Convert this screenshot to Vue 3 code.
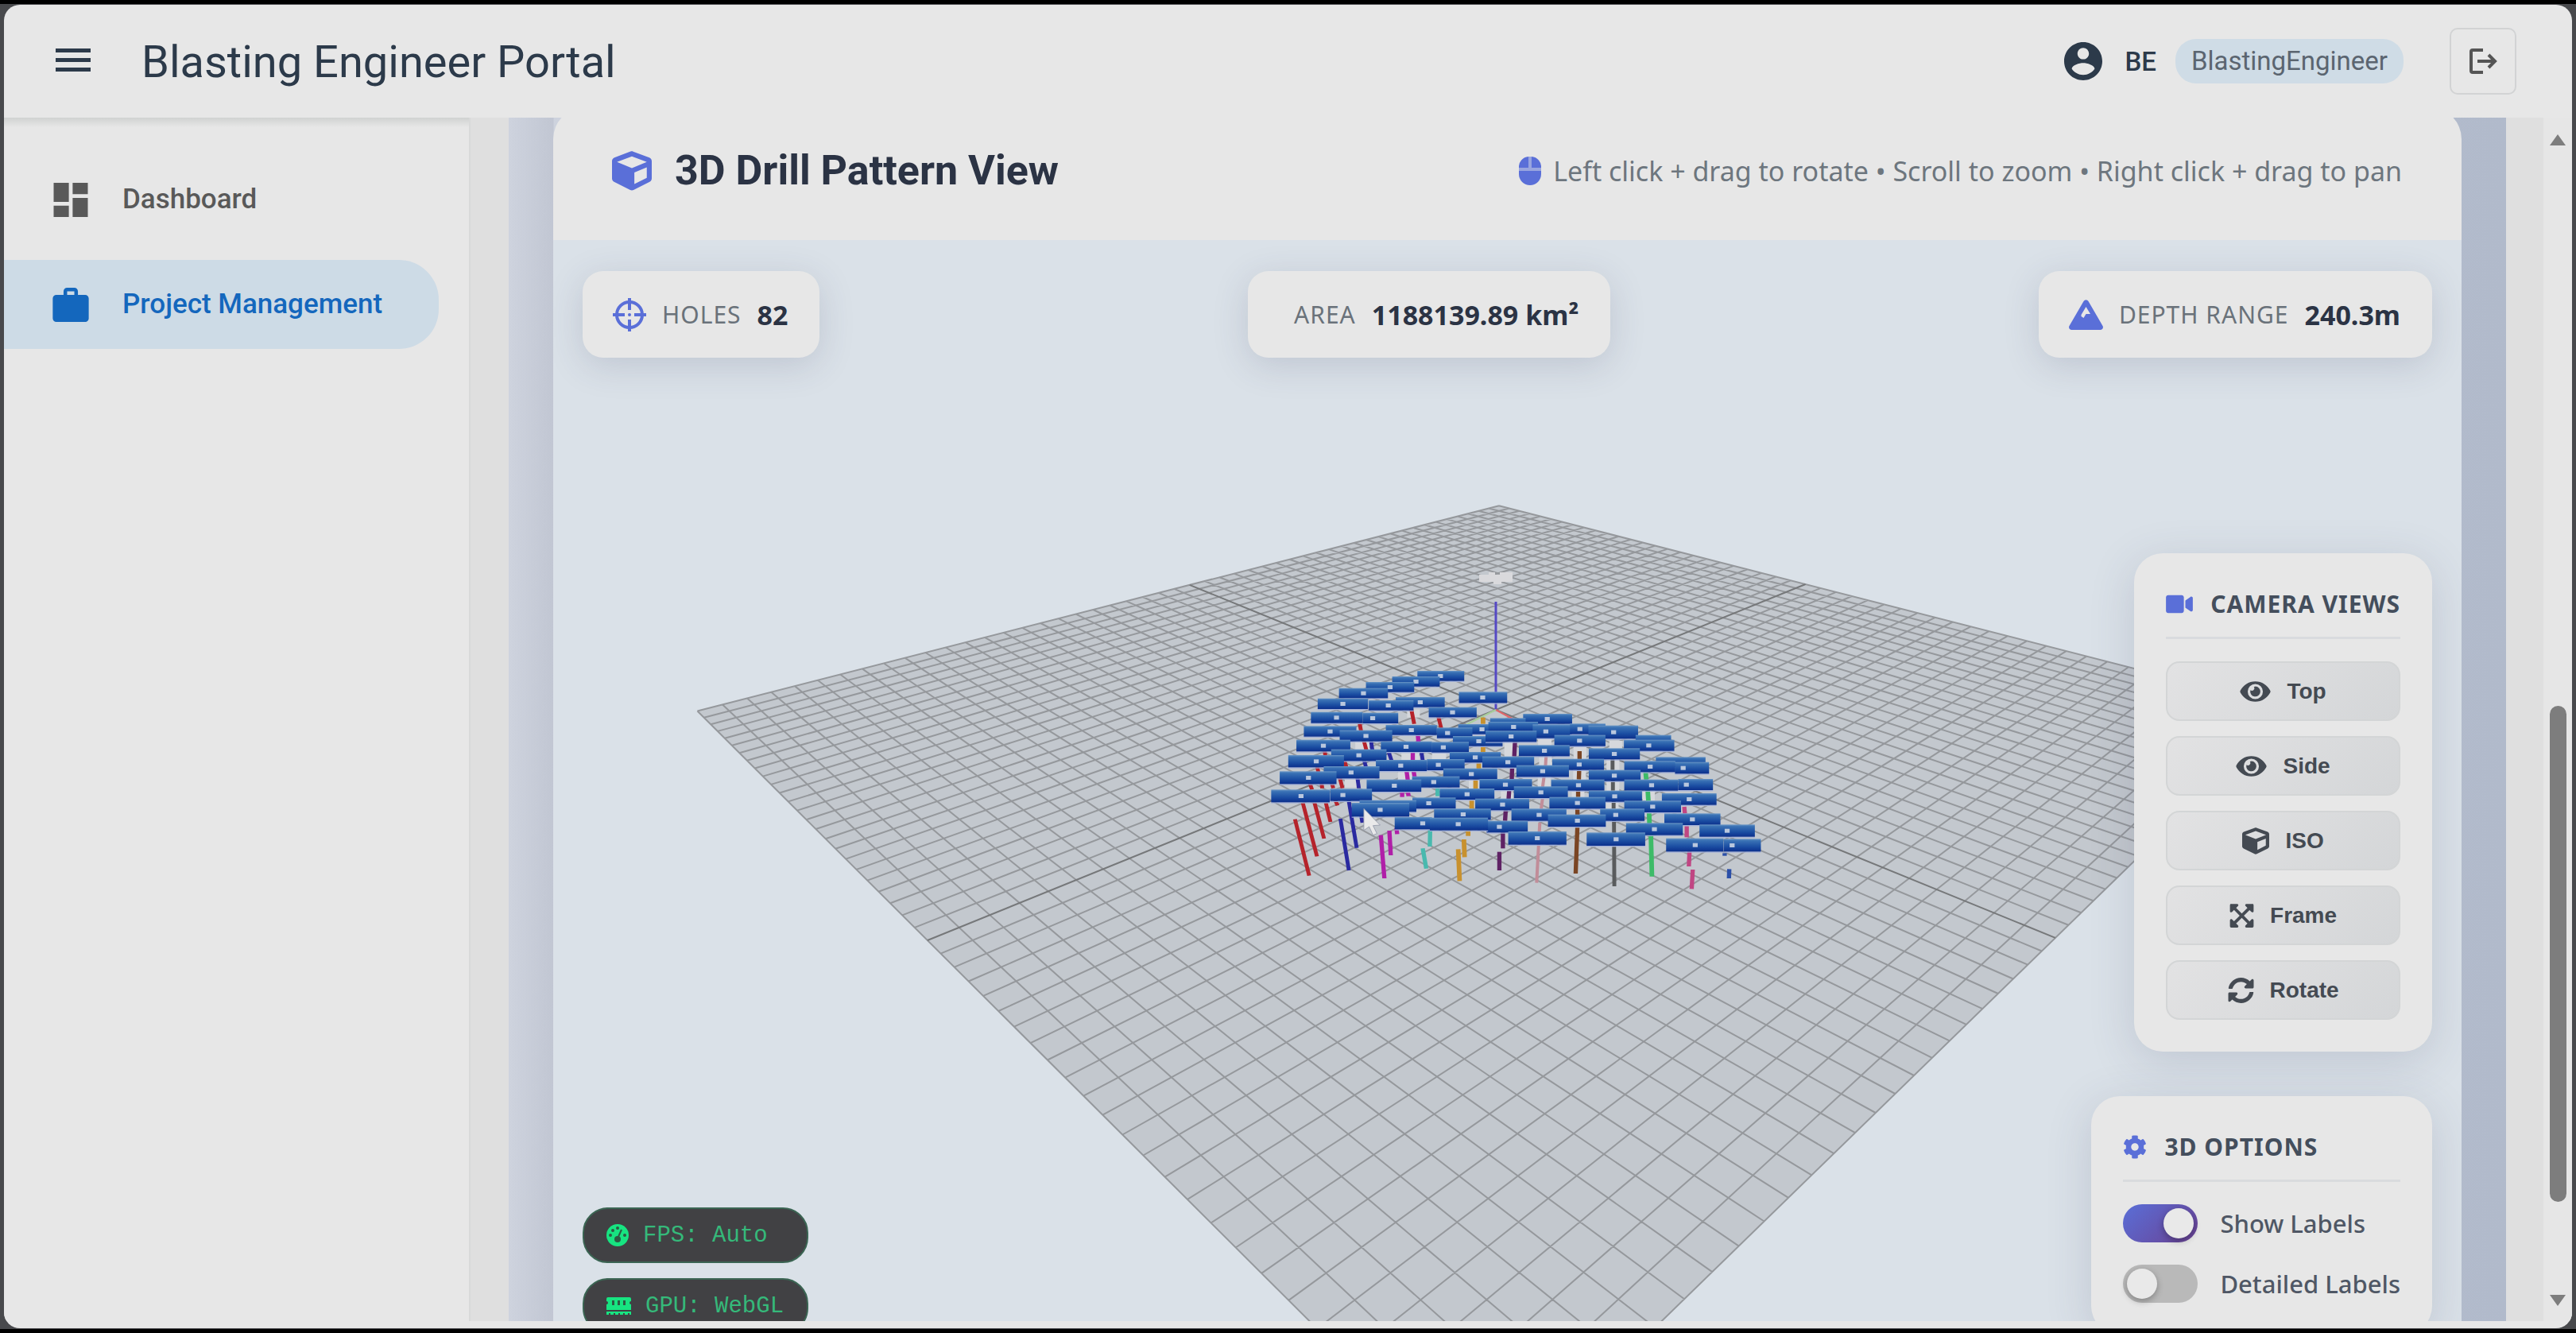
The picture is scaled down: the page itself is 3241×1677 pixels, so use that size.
<script setup>
import { ref } from 'vue'

const icons = {
  cube: { box: '0 0 512 512', d: 'M239.1 6.3l-208 78c-18.7 7-31.1 25-31.1 45v225.1c0 18.2 10.3 34.8 26.5 42.9l208 104c13.5 6.8 29.4 6.8 42.9 0l208-104c16.3-8.1 26.5-24.8 26.5-42.9V129.3c0-20-12.4-37.9-31.1-44.9l-208-78C262 2.2 250 2.2 239.1 6.3zM256 68.4l192 72v1.1l-192 78-192-78v-1.1l192-72zm32 356V275.5l160-65v133.9l-160 80z' },
  eye: { box: '0 0 576 512', d: 'M572.52 241.4C518.29 135.59 410.93 64 288 64S57.68 135.64 3.48 241.41a32.35 32.35 0 0 0 0 29.19C57.71 376.41 165.07 448 288 448s230.32-71.64 284.52-177.41a32.35 32.35 0 0 0 0-29.19zM288 400a144 144 0 1 1 144-144 143.93 143.93 0 0 1-144 144zm0-240a95.31 95.31 0 0 0-25.31 3.79 47.85 47.85 0 0 1-66.9 66.9A95.78 95.78 0 1 0 288 160z' },
  expand: { box: '0 0 448 512', d: 'M448 344v112a23.94 23.94 0 0 1-24 24H312c-21.39 0-32.09-25.9-17-41l36.2-36.2L224 295.6 116.77 402.9 153 439c15.09 15.1 4.39 41-17 41H24a23.94 23.94 0 0 1-24-24V344c0-21.4 25.89-32.1 41-17l36.19 36.2L184.46 256 77.18 148.7 41 185c-15.1 15.1-41 4.4-41-17V56a23.94 23.94 0 0 1 24-24h112c21.39 0 32.09 25.9 17 41l-36.2 36.2L224 216.4l107.23-107.3L295 73c-15.09-15.1-4.39-41 17-41h112a23.94 23.94 0 0 1 24 24v112c0 21.4-25.89 32.1-41 17l-36.19-36.2L263.54 256l107.28 107.3L407 327.1c15.1-15.2 41-4.5 41 16.9z' },
  sync: { box: '0 0 512 512', d: 'M370.72 133.28C339.458 104.008 298.888 87.962 255.848 88c-77.458.068-144.328 53.178-162.791 126.85-1.344 5.363-6.122 9.15-11.651 9.15H24.103c-7.498 0-13.194-6.807-11.807-14.176C33.933 94.924 134.813 8 256 8c66.448 0 126.791 26.136 171.315 68.685L463.03 40.97C478.149 25.851 504 36.559 504 57.941V192c0 13.255-10.745 24-24 24H345.941c-21.382 0-32.09-25.851-16.971-40.971l41.75-41.749zM32 296h134.059c21.382 0 32.09 25.851 16.971 40.971l-41.75 41.75c31.262 29.273 71.835 45.319 114.876 45.28 77.418-.07 144.315-53.144 162.787-126.849 1.344-5.363 6.122-9.15 11.651-9.15h57.304c7.498 0 13.194 6.807 11.807 14.176C478.067 417.076 377.187 504 256 504c-66.448 0-126.791-26.136-171.315-68.685L48.97 471.03C33.851 486.149 8 475.441 8 454.059V320c0-13.255 10.745-24 24-24z' },
}

const views = [
  { name: 'Top', icon: icons.eye, w: 39 },
  { name: 'Side', icon: icons.eye, w: 39 },
  { name: 'ISO', icon: icons.cube, w: 34 },
  { name: 'Frame', icon: icons.expand, w: 31 },
  { name: 'Rotate', icon: icons.sync, w: 33 },
]

const showLabels = ref(true)
const detailedLabels = ref(false)

// Ground plane seen through the scene camera; u and v run from -1 to 1.
const project = (u, v) => {
  const w = 1 - 0.2925 * u - 0.2947 * v
  return [(1882 - 52.5 * u - 1059 * v) / w - 696, 694 / w - 103]
}
const pt = (u, v) => project(u, v).map((n) => n.toFixed(1)).join(' ')
const DIV = 25
let gridPath = ''
for (let i = -DIV; i <= DIV; i++) {
  if (i === 0) continue
  const t = i / DIV
  gridPath += `M${pt(t, -1)}L${pt(t, 1)}M${pt(-1, t)}L${pt(1, t)}`
}
const centrePath = `M${pt(0, -1)}L${pt(0, 1)}M${pt(-1, 0)}L${pt(1, 0)}`
const groundPath = `M${pt(-1, -1)}L${pt(-1, 1)}L${pt(1, 1)}L${pt(1, -1)}Z`

// Drill holes: colour, stroke width and [x1, y1, x2, y2] of every visible piece.
const holes = [
  ['#b5232b', 11, [[200, 752, 240, 965], [222, 690, 262, 892], [255, 690, 282, 825], [287, 690, 300, 762], [312, 675, 320, 700], [240, 610, 248, 640], [262, 550, 266, 575], [528, 338, 536, 392], [604, 365, 612, 408], [382, 388, 386, 418], [393, 450, 401, 490], [283, 490, 286, 515], [338, 525, 346, 560], [326, 595, 334, 635], [303, 612, 308, 635], [274, 610, 277, 635]]],
  ['#2a2aa0', 11, [[328, 750, 352, 945], [350, 670, 374, 860], [386, 735, 390, 765], [376, 595, 380, 635], [414, 455, 418, 490], [464, 498, 472, 530], [394, 525, 400, 555], [556, 495, 560, 530]]],
  ['#b01fa8', 12, [[442, 812, 452, 975], [466, 795, 470, 888], [486, 785, 488, 808], [532, 495, 532, 530], [514, 565, 518, 605], [534, 568, 537, 592], [502, 640, 502, 668], [518, 645, 520, 665], [546, 430, 548, 460]]],
  ['#48b9ae', 12, [[560, 862, 570, 938], [581, 792, 580, 855], [602, 630, 602, 665]]],
  ['#c8912e', 13, [[660, 865, 664, 985], [676, 828, 678, 895], [688, 790, 688, 815], [730, 368, 730, 392], [730, 480, 730, 500], [718, 538, 718, 562], [709, 600, 709, 636], [698, 678, 698, 712]]],
  ['#5e2264', 12, [[786, 800, 786, 862], [776, 875, 776, 945], [820, 460, 818, 515], [812, 558, 811, 600], [804, 640, 802, 675], [794, 715, 792, 758]]],
  ['#c18d99', 9, [[890, 765, 881, 992], [908, 510, 906, 550], [902, 590, 898, 630], [898, 670, 894, 712]]],
  ['#7a4524', 12, [[996, 778, 991, 957], [1002, 495, 1002, 525], [1001, 565, 1000, 602], [998, 642, 998, 668], [996, 710, 996, 735]]],
  ['#595b5d', 11, [[1099, 750, 1100, 1005], [1095, 525, 1095, 566], [1096, 606, 1096, 644], [1098, 684, 1098, 712]]],
  ['#3dbb68', 13, [[1188, 572, 1190, 602], [1194, 640, 1196, 682], [1198, 724, 1199, 768], [1203, 810, 1206, 968]]],
  ['#c04683', 12, [[1321, 942, 1318, 1015], [1312, 872, 1310, 930], [1304, 778, 1304, 820], [1297, 705, 1299, 730]]],
  ['#2b4fa8', 12, [[1424, 940, 1423, 975], [1411, 880, 1411, 890]]],
]

// Label plates, back to front: x, y, width, height and the centre of the mark (0 when hidden).
const plates = [
  [545, 192, 132, 38, 610], [474, 213, 134, 38, 541], [400, 234, 136, 38, 468], [324, 257, 138, 38, 393],
  [662, 271, 136, 42, 729], [484, 291, 138, 38, 553], [264, 296, 142, 40, 335], [408, 303, 126, 38, 463],
  [577, 329, 135, 38, 644], [245, 347, 146, 42, 317], [391, 350, 100, 40, 419], [843, 354, 138, 38, 911],
  [750, 370, 100, 36, 0], [225, 400, 148, 40, 299], [660, 393, 100, 38, 727], [456, 396, 144, 38, 528],
  [745, 384, 140, 38, 816], [600, 406, 100, 40, 630], [870, 394, 110, 52, 907], [975, 391, 100, 40, 1003],
  [1027, 398, 140, 50, 1098], [326, 416, 148, 42, 400], [645, 438, 140, 38, 718], [737, 418, 144, 42, 809],
  [931, 434, 144, 42, 1002], [1160, 434, 100, 40, 0], [1127, 452, 142, 42, 1197], [204, 452, 152, 44, 280],
  [442, 458, 144, 40, 513], [585, 460, 105, 40, 618], [831, 472, 143, 42, 903], [1028, 484, 144, 42, 1100],
  [302, 488, 156, 44, 380], [636, 498, 144, 40, 708], [181, 510, 157, 46, 260], [728, 515, 146, 42, 800],
  [925, 524, 146, 42, 1001], [1217, 517, 140, 38, 0], [1128, 532, 144, 42, 1201], [1271, 536, 96, 44, 1294],
  [428, 528, 144, 42, 498], [572, 525, 106, 42, 604], [824, 548, 148, 44, 898], [618, 560, 152, 42, 697],
  [281, 552, 157, 46, 358], [1028, 566, 146, 42, 1100], [157, 571, 160, 48, 238], [530, 590, 134, 42, 591],
  [402, 602, 154, 46, 480], [720, 600, 148, 42, 793], [922, 602, 150, 42, 999], [1128, 602, 152, 42, 1205],
  [1280, 600, 98, 42, 1303], [817, 628, 152, 44, 893], [608, 636, 154, 42, 685], [1028, 644, 150, 42, 1101],
  [1234, 654, 154, 44, 1311], [133, 640, 165, 48, 217], [299, 637, 118, 46, 335], [531, 670, 122, 42, 577],
  [708, 674, 152, 44, 785], [917, 668, 158, 44, 996], [1128, 682, 160, 44, 1208], [592, 712, 160, 42, 674],
  [382, 680, 160, 44, 0], [360, 690, 162, 52, 440], [810, 712, 155, 46, 888], [1060, 712, 125, 46, 1104],
  [1241, 730, 158, 44, 1320], [481, 744, 105, 46, 560], [740, 758, 116, 44, 776], [580, 746, 164, 48, 660],
  [913, 734, 163, 46, 996], [1133, 766, 160, 46, 1213], [1340, 772, 156, 46, 1418], [801, 798, 164, 50, 883],
  [1022, 802, 165, 50, 1105], [1246, 824, 162, 50, 1328], [1409, 826, 104, 48, 1432],
]
const glows = [
  [885, 450, 38, 24], [985, 474, 36, 52], [1078, 524, 36, 44], [1086, 456, 36, 30], [888, 515, 36, 36],
  [790, 460, 34, 60], [984, 564, 36, 40], [1078, 606, 36, 40], [884, 590, 36, 40], [980, 642, 36, 28],
  [516, 338, 36, 30], [370, 456, 40, 34], [500, 496, 50, 34], [690, 600, 36, 36], [586, 480, 40, 46],
  [1180, 642, 34, 40], [1078, 684, 34, 30], [780, 640, 34, 36], [340, 596, 36, 36], [490, 568, 46, 36],
]
</script>

<template>
  <div class="desktop">
    <div class="window">
      <header class="topbar">
        <button class="menu" aria-label="Toggle menu"><span></span><span></span><span></span></button>
        <h1>Blasting Engineer Portal</h1>
        <div class="user">
          <svg class="avatar" viewBox="2 2 20 20"><path fill="currentColor" d="M12 2C6.48 2 2 6.48 2 12s4.48 10 10 10 10-4.48 10-10S17.52 2 12 2zm0 3c1.66 0 3 1.34 3 3s-1.34 3-3 3-3-1.34-3-3 1.34-3 3-3zm0 14.2c-2.5 0-4.71-1.28-6-3.22.03-1.99 4-3.08 6-3.08 1.99 0 5.97 1.09 6 3.08-1.29 1.94-3.5 3.22-6 3.22z" /></svg>
          <span class="initials">BE</span>
          <span class="role">BlastingEngineer</span>
        </div>
        <button class="logout" aria-label="Log out">
          <svg viewBox="0 0 36 34" fill="none" stroke="currentColor" stroke-width="4"><path d="M18 3H5a2 2 0 0 0-2 2v24a2 2 0 0 0 2 2h13" /><path d="M11 17h22M25 9l8 8-8 8" /></svg>
        </button>
      </header>

      <div class="body">
        <nav class="sidebar">
          <a href="#dashboard">
            <svg viewBox="3 3 18 18"><path fill="currentColor" d="M3 13h8V3H3v10zm0 8h8v-6H3v6zm10 0h8V11h-8v10zm0-18v6h8V3h-8z" /></svg>
            Dashboard
          </a>
          <a href="#projects" class="active">
            <svg viewBox="2 2 20 19"><path fill="currentColor" fill-rule="evenodd" d="M20 6h-4V4c0-1.1-.9-2-2-2h-4C8.9 2 8 2.9 8 4v2H4c-1.1 0-2 .9-2 2v11c0 1.1.9 2 2 2h16c1.1 0 2-.9 2-2V8c0-1.1-.9-2-2-2zm-6 0h-4V4h4v2z" /></svg>
            Project Management
          </a>
        </nav>

        <main class="content">
          <div class="backdrop">
            <section class="card">
              <div class="card-head">
                <svg class="cube" :viewBox="icons.cube.box"><path fill="currentColor" :d="icons.cube.d" /></svg>
                <h2>3D Drill Pattern View</h2>
                <p class="hint">
                  <svg viewBox="0 0 28 36"><path fill="currentColor" d="M0 14A13 13 0 0 1 12 0v14zM16 0A13 13 0 0 1 28 14H16zM0 18h28v4a14 14 0 0 1-28 0z" /><path fill="currentColor" opacity=".55" d="M12 0h4v14h-4zM0 14h28v4H0z" /></svg>
                  Left click + drag to rotate • Scroll to zoom • Right click + drag to pan
                </p>
              </div>

              <div class="viewport">
                <svg class="scene" viewBox="0 0 2401 1413" preserveAspectRatio="xMidYMin slice">
                  <defs>
                    <linearGradient id="plate" x1="0" y1="0" x2="0" y2="1">
                      <stop offset="0" stop-color="#6b97c6" />
                      <stop offset=".15" stop-color="#3a72b5" />
                      <stop offset=".6" stop-color="#1c4fa3" />
                      <stop offset="1" stop-color="#0b2f8c" />
                    </linearGradient>
                  </defs>
                  <path :d="groundPath" fill="#c3c8ce" />
                  <path :d="gridPath" class="grid-lines" />
                  <path :d="centrePath" class="grid-centre" />
                  <path d="M1165 421h12v-3h8v3h6v-3h16v12h-14v3h-10v-3h-18z" fill="#d9d9dc" />
                  <path d="M1186 455V591" stroke="#5549c4" stroke-width="3" />
                  <path d="M1186 591l26 14" stroke="#e0666a" stroke-width="2" />
                  <path d="M1186 591l-40 20" stroke="#a9cf9c" stroke-width="2" />
                  <svg x="844" y="478" width="700" height="360" viewBox="0 0 1568 1080" preserveAspectRatio="none">
                    <rect v-for="(g, i) in glows" :key="'g' + i" :x="g[0]" :y="g[1]" :width="g[2]" :height="g[3]" fill="#d6d8dc" />
                    <g v-for="(h, i) in holes" :key="'h' + i" :stroke="h[0]" :stroke-width="h[1]">
                      <path v-for="(s, j) in h[2]" :key="j" :d="`M${s[0]} ${s[1]}L${s[2]} ${s[3]}`" />
                    </g>
                    <template v-if="showLabels">
                      <g v-for="(p, i) in plates" :key="'p' + i">
                        <rect :x="p[0]" :y="p[1] + p[3]" :width="p[2]" height="4" fill="#a3b1d8" />
                        <rect :x="p[0]" :y="p[1]" :width="p[2]" :height="p[3]" fill="url(#plate)" />
                        <rect v-if="p[4]" :x="p[4] - 7" :y="p[1] + p[3] / 2 - 7" width="14" height="15" fill="#b9c7de" />
                      </g>
                    </template>
                    <path d="M394 712V794L409 780L420 812L431 806L420 776L440 774Z" fill="#e9e9ea" stroke="#8d93a5" stroke-width="2" />
                  </svg>
                </svg>

                <div class="stats">
                  <div class="stat">
                    <svg width="42" height="42" viewBox="0 0 42 42" fill="none" stroke="currentColor" stroke-width="4"><circle cx="21" cy="21" r="16" /><path d="M21 0v15M21 27v15M0 21h15M27 21h15" /><circle cx="21" cy="21" r="2" fill="currentColor" stroke="none" /></svg>
                    <span class="stat-label">HOLES</span><strong>82</strong>
                  </div>
                  <div class="stat no-icon">
                    <span class="stat-label">AREA</span><strong>1188139.89 km²</strong>
                  </div>
                  <div class="stat">
                    <svg width="43" height="38" viewBox="0 0 43 38"><path fill="currentColor" fill-rule="evenodd" d="M18.5 2a3.500 3.500 0 0 1 6 0l18 31c1.300 2.400-.3 5-3 5H3.500c-2.700 0-4.300-2.600-3-5zM21.500 9l-6 10v2l3 2 3-5h5.500z" /></svg>
                    <span class="stat-label">DEPTH RANGE</span><strong>240.3m</strong>
                  </div>
                </div>

                <div class="panels">
                  <section class="panel">
                    <h3>
                      <svg width="34" height="30" viewBox="0 0 576 512"><path fill="currentColor" d="M336.2 64H47.8C21.4 64 0 85.4 0 111.8v288.4C0 426.6 21.4 448 47.8 448h288.4c26.4 0 47.8-21.4 47.8-47.8V111.8c0-26.4-21.4-47.8-47.8-47.8zm189.400 37.7L416 177.300v157.400l109.600 75.500c21.200 14.600 50.400-.3 50.400-25.800V127.500c0-25.400-29.100-40.400-50.400-25.800z" /></svg>
                      CAMERA VIEWS
                    </h3>
                    <div class="view-buttons">
                      <button v-for="v in views" :key="v.name">
                        <svg :width="v.w" height="34" :viewBox="v.icon.box"><path fill="currentColor" :d="v.icon.d" /></svg>
                        {{ v.name }}
                      </button>
                    </div>
                  </section>

                  <section class="panel">
                    <h3>
                      <svg width="30" height="30" viewBox="0 0 512 512"><path fill="currentColor" d="M487.4 315.7l-42.6-24.6c4.3-23.2 4.3-47 0-70.2l42.6-24.6c4.9-2.8 7.1-8.6 5.5-14-11.1-35.6-30-67.8-54.7-94.6-3.8-4.1-10-5.1-14.8-2.3L380.8 110c-17.9-15.4-38.5-27.3-60.8-35.1V25.8c0-5.6-3.9-10.5-9.4-11.7-36.7-8.2-74.3-7.8-109.2 0-5.5 1.2-9.4 6.1-9.4 11.7V75c-22.2 7.9-42.8 19.8-60.8 35.1L88.7 85.5c-4.9-2.8-11-1.9-14.8 2.3-24.7 26.7-43.6 58.9-54.7 94.6-1.7 5.4.6 11.2 5.5 14L67.3 221c-4.3 23.2-4.3 47 0 70.2l-42.6 24.6c-4.9 2.8-7.1 8.6-5.5 14 11.1 35.6 30 67.8 54.7 94.6 3.8 4.1 10 5.1 14.8 2.3l42.6-24.6c17.9 15.4 38.5 27.3 60.8 35.1v49.2c0 5.6 3.9 10.5 9.4 11.7 36.7 8.2 74.3 7.8 109.2 0 5.5-1.2 9.4-6.1 9.4-11.7v-49.2c22.2-7.9 42.8-19.8 60.8-35.1l42.6 24.6c4.9 2.8 11 1.9 14.8-2.3 24.7-26.7 43.6-58.9 54.7-94.6 1.5-5.5-.7-11.3-5.6-14.1zM256 336c-44.1 0-80-35.9-80-80s35.9-80 80-80 80 35.9 80 80-35.900 80-80 80z" /></svg>
                      3D OPTIONS
                    </h3>
                    <div class="switches">
                      <label><input v-model="showLabels" type="checkbox" />Show Labels</label>
                      <label><input v-model="detailedLabels" type="checkbox" />Detailed Labels</label>
                    </div>
                  </section>
                </div>

                <div class="badges">
                  <div class="badge">
                    <svg width="28" height="28" viewBox="0 0 28 28"><circle cx="14" cy="14" r="14" fill="currentColor" /><g fill="#2d5a44"><circle cx="5" cy="14" r="2" /><circle cx="8" cy="8" r="2" /><circle cx="14" cy="5" r="2" /><circle cx="23" cy="14" r="2" /><circle cx="14" cy="19" r="4" /></g><path d="M14 18l5-11" stroke="#2d5a44" stroke-width="2" /></svg>
                    FPS: Auto
                  </div>
                  <div class="badge">
                    <svg width="31" height="22" viewBox="0 0 31 22"><path fill="currentColor" d="M2 0h27a2 2 0 0 1 2 2v3a2 2 0 0 0 0 4v7H0V9a2 2 0 0 0 0-4V2a2 2 0 0 1 2-2zM0 18h31v4h-2v-2h-2v2h-4v-2h-2v2h-4v-2h-2v2h-4v-2H9v2H5v-2H3v2H0z" /><path d="M7 4h3v6H7zM14 4h3v6h-3zM21 4h3v6h-3z" fill="#2d5a44" /></svg>
                    GPU: WebGL
                  </div>
                </div>
              </div>
            </section>
          </div>
          <div class="scrollbar" aria-hidden="true">
            <svg class="arrow" viewBox="0 0 22 16"><path d="M11 1L21 15H1z" /></svg>
            <div class="track"><div class="thumb"></div></div>
            <svg class="arrow" viewBox="0 0 22 16"><path d="M1 1h20L11 15z" /></svg>
          </div>
        </main>
      </div>
    </div>
  </div>
</template>

<style>
body {
  margin: 0;
  background: #000;
}
</style>

<style scoped>
* {
  box-sizing: border-box;
}
h1, h2, h3, p {
  margin: 0;
}
button {
  cursor: pointer;
}
svg {
  display: block;
  flex: none;
}
.desktop {
  height: 100vh;
  padding: 6px 5px;
  background: linear-gradient(#000 5px, #48494c 5px, #48494c calc(100% - 5px), #000 calc(100% - 5px));
  font-family: "Noto Sans", sans-serif;
}
.window {
  display: flex;
  flex-direction: column;
  height: 100%;
  padding-bottom: 9px;
  overflow: hidden;
  background: #e7e7e7;
  border-radius: 20px;
}
.topbar {
  display: flex;
  flex: none;
  align-items: center;
  height: 142px;
  padding: 0 70px 0 59px;
  color: #2c3a4a;
  font-family: Roboto, sans-serif;
}
.menu {
  display: flex;
  flex-direction: column;
  gap: 7px;
  width: 56px;
  margin: 0 58px 4px 0;
  padding: 0 6px;
  background: none;
  border: 0;
}
.menu span {
  height: 5px;
  background: #2c3a4a;
}
h1 {
  padding-top: 2px;
  font-size: 56px;
  font-weight: 400;
  line-height: 72px;
}
.user {
  display: flex;
  align-items: center;
  margin-left: auto;
}
.avatar {
  width: 48px;
  height: 48px;
}
.initials {
  margin: 0 24px 0 28px;
  font-size: 33px;
  font-weight: 500;
}
.role {
  padding: 0 20px;
  color: #5b6570;
  background: #cfdce6;
  border-radius: 26px;
  font-size: 33px;
  line-height: 56px;
}
.logout {
  display: grid;
  place-items: center;
  width: 84px;
  height: 84px;
  margin-left: 58px;
  color: #555;
  background: none;
  border: 2px solid #d2d3d4;
  border-radius: 10px;
}
.logout svg {
  width: 36px;
  height: 34px;
}
.body {
  display: flex;
  flex: 1;
  min-height: 0;
}
.sidebar {
  display: flex;
  flex: none;
  flex-direction: column;
  gap: 20px;
  width: 587px;
  padding: 47px 38px 0 0;
  border-right: 2px solid #d8d9d9;
  background: linear-gradient(#d0d2d1, #e7e7e7 12px);
}
.sidebar a {
  display: flex;
  align-items: center;
  gap: 42px;
  height: 112px;
  padding-left: 61px;
  color: #595959;
  border-radius: 0 50px 50px 0;
  font: 500 35px/44px Roboto, sans-serif;
  text-decoration: none;
}
.sidebar svg {
  width: 46px;
  height: 43px;
}
.sidebar .active {
  color: #1467bd;
  background: #cddbe6;
}
.content {
  display: flex;
  flex: 1;
  min-width: 0;
  padding-left: 48px;
  overflow: hidden;
  background: #dfdfdf;
}
.backdrop {
  flex: 1;
  min-width: 0;
  padding: 0 56px;
  background:
    linear-gradient(90deg, transparent, rgb(120 125 145 / 14%) 56px, transparent 57px),
    linear-gradient(90deg, #ced3de, #b1bacb);
}
.card {
  margin-top: -13px;
  overflow: hidden;
  background: #e7e7e7;
  border-radius: 40px 40px 0 0;
}
.card-head {
  display: flex;
  align-items: center;
  height: 167px;
  padding: 13px 75px 20px 73px;
}
.cube {
  width: 52px;
  height: 50px;
  margin-right: 28px;
  color: #5a6fd8;
}
h2 {
  color: #2b3344;
  font: 700 52px/60px Roboto, sans-serif;
}
.hint {
  display: flex;
  align-items: center;
  gap: 15px;
  margin-left: auto;
  color: #6d767e;
  font-size: 34px;
  line-height: 44px;
}
.hint svg {
  width: 28px;
  height: 36px;
  color: #5a6fd8;
}
.viewport {
  position: relative;
  min-height: 1413px;
  padding: 39px 37px 37px;
  background: #dae1e8;
}
.scene {
  position: absolute;
  inset: 0;
  width: 100%;
  height: 100%;
}
.grid-lines {
  fill: none;
  stroke: #95989c;
  stroke-width: 2;
}
.grid-centre {
  fill: none;
  stroke: #76787a;
  stroke-width: 2;
}
.stats {
  position: relative;
  display: flex;
  justify-content: space-between;
}
.stat {
  display: flex;
  align-items: center;
  gap: 20px;
  height: 109px;
  padding: 0 40px 0 38px;
  background: #e7e7e7;
  border-radius: 26px;
  box-shadow: 0 10px 44px rgb(60 65 100 / 17%);
  color: #5a6fd8;
}
.no-icon {
  padding-left: 58px;
}
.stat-label {
  color: #6a727a;
  font-size: 30px;
  letter-spacing: 1px;
}
.stat strong {
  color: #2b3344;
  font-size: 34px;
}
.panels {
  position: absolute;
  top: 394px;
  right: 37px;
  display: flex;
  flex-direction: column;
  align-items: flex-end;
  gap: 56px;
}
.panel {
  padding: 40px;
  background: #e7e7e7;
  border-radius: 36px;
  box-shadow: 0 12px 56px rgb(60 65 100 / 17%);
}
h3 {
  display: flex;
  align-items: center;
  gap: 22px;
  height: 68px;
  padding-bottom: 18px;
  color: #444e5c;
  border-bottom: 3px solid #d9dbde;
  font-size: 30px;
  letter-spacing: 1px;
}
h3 svg {
  color: #5a6fd8;
}
.view-buttons {
  display: flex;
  flex-direction: column;
  gap: 19px;
  padding-top: 28px;
}
.view-buttons button {
  display: flex;
  align-items: center;
  justify-content: center;
  gap: 20px;
  height: 75px;
  color: #444a52;
  background: linear-gradient(135deg, #e2e2e3, #d4d6d8);
  border: 2px solid #d3d5d6;
  border-radius: 17px;
  font: 700 28px "Liberation Sans", sans-serif;
}
.switches {
  display: flex;
  flex-direction: column;
  gap: 28px;
  padding-top: 28px;
}
.switches label {
  display: flex;
  align-items: center;
  gap: 28px;
  height: 48px;
  color: #4f5765;
  font-size: 31px;
  font-weight: 500;
}
.switches input {
  flex: none;
  width: 94px;
  height: 48px;
  margin: 0;
  padding: 5px;
  appearance: none;
  background: #b9b9b9;
  border-radius: 24px;
}
.switches input::before {
  display: block;
  width: 38px;
  height: 38px;
  background: #e9e9e9;
  border-radius: 50%;
  box-shadow: 0 3px 8px rgb(0 0 0 / 30%);
  content: "";
}
.switches input:checked {
  background: linear-gradient(135deg, #5a6fd8, #6a4192);
}
.switches input:checked::before {
  margin-left: auto;
}
.badges {
  position: absolute;
  bottom: 37px;
  left: 37px;
  display: flex;
  flex-direction: column;
  gap: 19px;
}
.badge {
  display: flex;
  align-items: center;
  gap: 18px;
  height: 70px;
  padding: 0 29px 0 28px;
  color: #35b97a;
  background: #414144;
  border: 2px solid #3b6553;
  border-radius: 32px;
  font: 29px "Liberation Mono", monospace;
}
.badge svg {
  color: #17e481;
}
.scrollbar {
  display: flex;
  flex: none;
  flex-direction: column;
  align-items: center;
  width: 36px;
  margin-left: 47px;
  padding: 20px 0 18px;
  background: #e6e6e6;
}
.arrow {
  width: 22px;
  height: 16px;
  fill: #7d7d7d;
}
.track {
  display: flex;
  flex: 1;
  flex-direction: column;
  justify-content: flex-end;
  padding-bottom: 116px;
}
.thumb {
  width: 21px;
  height: 47%;
  background: #7d7d7d;
  border-radius: 11px;
}
</style>
